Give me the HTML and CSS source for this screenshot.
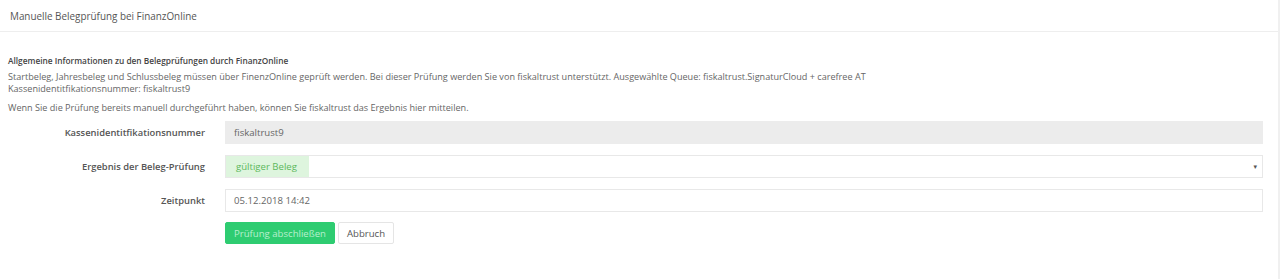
FILE: index.html
```html
<!DOCTYPE html>
<html lang="de">
<head>
  <meta charset="UTF-8" />
  <title>Manuelle Belegprüfung</title>
  <link rel="stylesheet" href="styles.css">
</head>
<body>
  <div class="panel">
    <div class="panel-heading">Manuelle Belegprüfung bei FinanzOnline</div>
    <div class="panel-body">
      <h5 class="info-title">Allgemeine Informationen zu den Belegprüfungen durch FinanzOnline</h5>
      <p class="info-text">Startbeleg, Jahresbeleg und Schlussbeleg müssen über FinenzOnline geprüft werden. Bei dieser Prüfung werden Sie von fiskaltrust unterstützt. Ausgewählte Queue: fiskaltrust.SignaturCloud + carefree AT<br>Kassenidentitfikationsnummer: fiskaltrust9</p>
      <p class="info-text">Wenn Sie die Prüfung bereits manuell durchgeführt haben, können Sie fiskaltrust das Ergebnis hier mitteilen.</p>

      <form class="check-form">
        <label class="form-label">Kassenidentitfikationsnummer</label>
        <div class="form-field readonly">fiskaltrust9</div>

        <label class="form-label">Ergebnis der Beleg-Prüfung</label>
        <div class="form-field select">
          <span class="chip">gültiger Beleg</span>
          <span class="caret">&#9662;</span>
        </div>

        <label class="form-label">Zeitpunkt</label>
        <div class="form-field">05.12.2018 14:42</div>

        <div></div>
        <div class="actions">
          <button type="button" class="btn btn-success">Prüfung abschließen</button>
          <button type="button" class="btn btn-default">Abbruch</button>
        </div>
      </form>
    </div>
  </div>
</body>
</html>
```

FILE: styles.css
```css
* {
  margin: 0;
  padding: 0;
  box-sizing: border-box;
  font-family: "Open Sans", "DejaVu Sans", sans-serif;
}

html, body {
  width: 100%;
  height: 100%;
  background-color: white;
  overflow: hidden;
}

.panel {
  height: 100%;
  border-right: 2px solid #f0f0f0;
}

.panel-heading {
  height: 32px;
  padding: 0 10px;
  display: flex;
  align-items: center;
  border-bottom: 1px solid #eeeeee;
  font-size: 9.9px;
  color: #555;
}

.panel-body {
  padding: 23px 15px 0 8px;
}

.info-title {
  font-size: 8.3px;
  font-weight: 600;
  color: #444;
  line-height: 12px;
  margin-bottom: 4px;
}

.info-text {
  font-size: 9.1px;
  color: #666;
  line-height: 12px;
  margin-bottom: 7px;
}

.check-form {
  display: grid;
  grid-template-columns: 197px 1fr;
  column-gap: 20px;
  row-gap: 11px;
  margin-top: 6px;
}

.form-label {
  display: flex;
  align-items: center;
  justify-content: flex-end;
  font-size: 9.4px;
  font-weight: 600;
  color: #555;
}

.form-field {
  height: 23px;
  display: flex;
  align-items: center;
  padding: 0 8px;
  border: 1px solid #e8e8e8;
  font-size: 9.6px;
  color: #666;
  background-color: white;
}

.form-field.readonly {
  background-color: #ececec;
  border-color: #ececec;
}

.form-field.select {
  padding: 0;
  justify-content: space-between;
}

.chip {
  height: 100%;
  display: flex;
  align-items: center;
  padding: 0 12px 0 10px;
  background-color: #def5de;
  color: #5cb85c;
}

.caret {
  font-size: 7px;
  color: #555;
  padding-right: 5px;
}

.actions {
  display: flex;
  gap: 3px;
  margin-top: -1px;
}

.btn {
  height: 22px;
  padding: 0 8px;
  font-size: 9.6px;
  border: 1px solid transparent;
  border-radius: 2px;
  cursor: pointer;
}

.btn-success {
  background-color: #2ecc71;
  border-color: #2ecc71;
  color: #b9efcf;
}

.btn-default {
  background-color: white;
  border-color: #e5e5e5;
  color: #555;
}
```
